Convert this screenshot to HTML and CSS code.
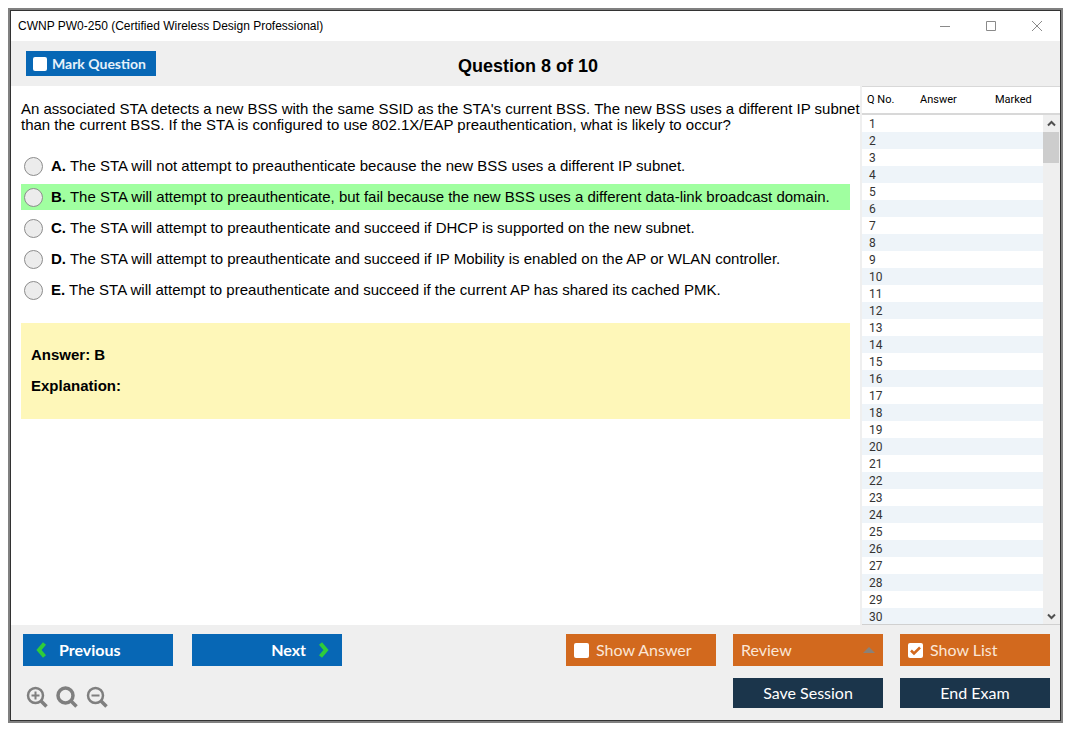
FILE: index.html
```html
<!DOCTYPE html>
<html lang="en">
<head>
    <meta charset="UTF-8">
    <meta name="viewport" content="width=device-width, initial-scale=1.0">
    <title>CWNP PW0-250 (Certified Wireless Design Professional)</title>
    <link rel="stylesheet" href="styles.css">
</head>
<body>
    <div class="window">
        <!-- Title Bar -->
        <div class="title-bar">
            <span>CWNP PW0-250 (Certified Wireless Design Professional)</span>
            <div class="window-controls">
                <button type="button" aria-label="Minimize"><svg width="12" height="12" viewBox="0 0 12 12"><path d="M1 6.500h10"/></svg></button>
                <button type="button" aria-label="Maximize"><svg width="12" height="12" viewBox="0 0 12 12"><path d="M1.500 1.500h9v9h-9z"/></svg></button>
                <button type="button" aria-label="Close"><svg width="12" height="12" viewBox="0 0 12 12"><path d="M1 1l10 10M11 1L1 11"/></svg></button>
            </div>
        </div>
        <!-- Question Header -->
        <header class="question-header">
            <label class="mark-question"><input type="checkbox" class="check"> Mark Question</label>
            <h1>Question 8 of 10</h1>
        </header>
        <main class="main">
            <!-- Question and Answers -->
            <section class="question">
                <p class="question-text" id="question-text">An associated STA detects a new BSS with the same SSID as the STA's current BSS. The new BSS uses a different IP subnet than the current BSS. If the STA is configured to use 802.1X/EAP preauthentication, what is likely to occur?</p>
                <div class="options" role="radiogroup" aria-labelledby="question-text">
                    <label class="option"><input type="radio" name="answer" value="A"><span><b>A.</b> The STA will not attempt to preauthenticate because the new BSS uses a different IP subnet.</span></label>
                    <label class="option correct"><input type="radio" name="answer" value="B"><span><b>B.</b> The STA will attempt to preauthenticate, but fail because the new BSS uses a different data-link broadcast domain.</span></label>
                    <label class="option"><input type="radio" name="answer" value="C"><span><b>C.</b> The STA will attempt to preauthenticate and succeed if DHCP is supported on the new subnet.</span></label>
                    <label class="option"><input type="radio" name="answer" value="D"><span><b>D.</b> The STA will attempt to preauthenticate and succeed if IP Mobility is enabled on the AP or WLAN controller.</span></label>
                    <label class="option"><input type="radio" name="answer" value="E"><span><b>E.</b> The STA will attempt to preauthenticate and succeed if the current AP has shared its cached PMK.</span></label>
                </div>
                <div class="explanation">
                    <p>Answer: B</p>
                    <p>Explanation:</p>
                </div>
            </section>
            <!-- Question List -->
            <aside class="question-list">
                <table>
                    <thead>
                        <tr><th>Q No.</th><th>Answer</th><th>Marked</th></tr>
                    </thead>
                    <tbody>
                        <tr><td>1</td><td></td><td></td></tr>
                        <tr><td>2</td><td></td><td></td></tr>
                        <tr><td>3</td><td></td><td></td></tr>
                        <tr><td>4</td><td></td><td></td></tr>
                        <tr><td>5</td><td></td><td></td></tr>
                        <tr><td>6</td><td></td><td></td></tr>
                        <tr><td>7</td><td></td><td></td></tr>
                        <tr><td>8</td><td></td><td></td></tr>
                        <tr><td>9</td><td></td><td></td></tr>
                        <tr><td>10</td><td></td><td></td></tr>
                        <tr><td>11</td><td></td><td></td></tr>
                        <tr><td>12</td><td></td><td></td></tr>
                        <tr><td>13</td><td></td><td></td></tr>
                        <tr><td>14</td><td></td><td></td></tr>
                        <tr><td>15</td><td></td><td></td></tr>
                        <tr><td>16</td><td></td><td></td></tr>
                        <tr><td>17</td><td></td><td></td></tr>
                        <tr><td>18</td><td></td><td></td></tr>
                        <tr><td>19</td><td></td><td></td></tr>
                        <tr><td>20</td><td></td><td></td></tr>
                        <tr><td>21</td><td></td><td></td></tr>
                        <tr><td>22</td><td></td><td></td></tr>
                        <tr><td>23</td><td></td><td></td></tr>
                        <tr><td>24</td><td></td><td></td></tr>
                        <tr><td>25</td><td></td><td></td></tr>
                        <tr><td>26</td><td></td><td></td></tr>
                        <tr><td>27</td><td></td><td></td></tr>
                        <tr><td>28</td><td></td><td></td></tr>
                        <tr><td>29</td><td></td><td></td></tr>
                        <tr><td>30</td><td></td><td></td></tr>
                    </tbody>
                </table>
                <div class="scrollbar">
                    <button type="button" aria-label="Scroll up"><svg width="9" height="7" viewBox="0 0 9 7"><path d="M1 5.500L4.500 2L8 5.500"/></svg></button>
                    <div class="scroll-thumb"></div>
                    <button type="button" aria-label="Scroll down"><svg width="9" height="7" viewBox="0 0 9 7"><path d="M1 1.500L4.500 5L8 1.500"/></svg></button>
                </div>
            </aside>
        </main>
        <!-- Bottom Controls -->
        <footer class="footer">
            <div class="footer-left">
                <div class="nav-buttons">
                    <button type="button" class="btn nav-btn">
                        <svg width="10" height="16" viewBox="0 0 10 16"><path d="M8.500 1.500L3 8L8.500 14.500"/></svg>
                        Previous
                    </button>
                    <button type="button" class="btn nav-btn next">
                        Next
                        <svg width="10" height="16" viewBox="0 0 10 16"><path d="M1.500 1.500L7 8L1.500 14.500"/></svg>
                    </button>
                </div>
                <div class="zoom-buttons">
                    <button type="button" aria-label="Zoom in"><svg width="22" height="22" viewBox="0 0 22 22"><circle cx="9.500" cy="9.500" r="7.500"/><path class="handle" d="M14.500 14.500L20.500 20.500"/><path d="M5.500 9.500h8M9.500 5.500v8"/></svg></button>
                    <button type="button" aria-label="Reset zoom"><svg width="22" height="22" viewBox="0 0 22 22"><circle class="plain" cx="9.500" cy="9.500" r="7.500"/><path class="handle" d="M14.500 14.500L20.500 20.500"/></svg></button>
                    <button type="button" aria-label="Zoom out"><svg width="22" height="22" viewBox="0 0 22 22"><circle cx="9.500" cy="9.500" r="7.500"/><path class="handle" d="M14.500 14.500L20.500 20.500"/><path d="M5.500 9.500h8"/></svg></button>
                </div>
            </div>
            <div class="footer-right">
                <label class="btn orange"><input type="checkbox" class="check"> Show Answer</label>
                <button type="button" class="btn orange review" aria-haspopup="true">Review <svg width="12" height="6" viewBox="0 0 12 6"><path d="M6 0l6 6H0z"/></svg></button>
                <label class="btn orange"><input type="checkbox" class="check" checked> Show List</label>
                <button type="button" class="btn dark save">Save Session</button>
                <button type="button" class="btn dark">End Exam</button>
            </div>
        </footer>
    </div>
</body>
</html>
```

FILE: styles.css
```css
/* Global Styling */
* {
    box-sizing: border-box;
}
body {
    margin: 0;
    padding: 8px 12px 12px 8px;
    min-height: 100vh;
    display: flex;
    background-color: #fff;
    color: #000;
    font-family: "Liberation Sans", Arial, sans-serif;
    font-size: 15px;
    line-height: 16px;
    text-rendering: optimizeLegibility;
}
button {
    border: none;
    padding: 0;
    background: none;
    font: inherit;
    cursor: pointer;
}
svg {
    display: block;
    fill: none;
}
p {
    margin: 0;
}
/* Window Frame */
.window {
    flex: 1;
    min-width: 0;
    display: flex;
    flex-direction: column;
    border: 2px solid #808080;
    outline: 1px solid #333;
    outline-offset: -3px;
    padding: 1px;
}
.title-bar {
    display: flex;
    justify-content: space-between;
    align-items: center;
    height: 30px;
    padding: 0 17px 0 7px;
    font-size: 12px;
}
.window-controls {
    display: flex;
    gap: 34px;
}
.window-controls path {
    stroke: #8a8a8a;
}
/* Question Header */
.question-header {
    display: grid;
    grid-template-columns: 1fr auto 1fr;
    align-items: center;
    height: 45px;
    padding: 0 30px 0 15px;
    background-color: #efefef;
}
.question-header h1 {
    margin: 0;
    padding-top: 4px;
    font-size: 18px;
    line-height: 20px;
}
.mark-question {
    justify-self: start;
    display: flex;
    align-items: center;
    gap: 5px;
    height: 25px;
    padding: 0 10px 0 7px;
    background-color: #0767b5;
    color: #e6f1fa;
    font-family: Lato, sans-serif;
    font-size: 14px;
    font-weight: bold;
}
.check {
    appearance: none;
    flex: none;
    width: 14px;
    height: 14px;
    margin: 0;
    border-radius: 2px;
    background-color: #fff;
}
/* Question and Answers */
.main {
    flex: 1;
    display: flex;
}
.question {
    flex: 1;
    padding: 15px 0 15px 10px;
}
.options {
    display: flex;
    flex-direction: column;
    gap: 5px;
    margin: 20px 10px 20px 0;
}
.option {
    display: flex;
    align-items: center;
    gap: 8px;
    min-height: 26px;
    padding: 0 3px;
}
.option input {
    appearance: none;
    flex: none;
    width: 19px;
    height: 19px;
    margin: 0;
    border: 1px solid #8c8c8c;
    border-radius: 50%;
    background-color: #ececec;
}
.option input:checked {
    box-shadow: inset 0 0 0 4px #ececec;
    background-color: #333;
}
.correct {
    background-color: #a0ffa0;
}
.explanation {
    display: flex;
    flex-direction: column;
    gap: 15px;
    margin-right: 10px;
    padding: 24px 10px 25px;
    background-color: #fef7b9;
    font-weight: bold;
}
/* Question List */
.question-list {
    position: relative;
    width: 200px;
    border-left: 2px solid #efefef;
    font-family: Roboto, sans-serif;
    font-size: 11px;
}
.question-list::after {
    content: "";
    position: absolute;
    right: 0;
    bottom: 0;
    left: 0;
    height: 1px;
    background-color: #d0d0d0;
}
.question-list table {
    width: 100%;
    border-spacing: 0;
    table-layout: fixed;
}
.question-list th {
    height: 29px;
    padding: 0 5px;
    border-top: 1px solid #d8d8d8;
    border-bottom: 2px solid #d8d8d8;
    font-weight: normal;
    text-align: left;
}
.question-list th:first-child {
    width: 53px;
}
.question-list th:nth-child(2) {
    width: 75px;
}
.question-list td {
    height: 17px;
    padding: 0 7px;
    color: #333;
    font-size: 12px;
}
.question-list tr:nth-child(even) td {
    background-color: #eef4f9;
}
.scrollbar {
    position: absolute;
    top: 29px;
    right: 0;
    bottom: 0;
    width: 17px;
    display: flex;
    flex-direction: column;
    background-color: #efefef;
}
.scrollbar button {
    display: flex;
    align-items: center;
    justify-content: center;
    height: 17px;
}
.scrollbar button:last-child {
    margin-top: auto;
}
.scrollbar path {
    stroke: #505050;
    stroke-width: 2;
}
.scroll-thumb {
    height: 31px;
    margin-right: 1px;
    background-color: #cdcdcd;
}
/* Bottom Controls */
.footer {
    display: flex;
    justify-content: space-between;
    padding: 9px 10px 12px 12px;
    background-color: #efefef;
}
.footer-left {
    display: flex;
    flex-direction: column;
    gap: 20px;
}
.nav-buttons {
    display: flex;
    gap: 19px;
}
.btn {
    display: flex;
    align-items: center;
    width: 150px;
    height: 32px;
    font-family: Lato, sans-serif;
    font-size: 16px;
    cursor: pointer;
}
.nav-btn {
    gap: 13px;
    padding: 0 13px;
    background-color: #0767b5;
    color: #fff;
    font-weight: bold;
}
.nav-btn path {
    stroke: #2fcc3a;
    stroke-width: 4;
}
.next {
    justify-content: flex-end;
}
.zoom-buttons {
    display: flex;
    gap: 8px;
    padding-left: 3px;
}
.zoom-buttons svg {
    stroke: #7f7f7f;
    stroke-width: 2;
}
.zoom-buttons circle {
    stroke-width: 2.5;
}
.zoom-buttons .handle,
.zoom-buttons .plain {
    stroke-width: 3.5;
}
.footer-right {
    display: grid;
    grid-template-columns: repeat(3, 150px);
    gap: 12px 17px;
}
.orange {
    gap: 7px;
    padding: 0 8px;
    background-color: #d2691e;
    color: #fbe6d6;
}
.orange .check {
    width: 15px;
    height: 15px;
}
.check:checked {
    background-image: url("data:image/svg+xml,%3Csvg xmlns='http://www.w3.org/2000/svg' viewBox='0 0 15 15'%3E%3Cpath d='M3 7.500l3 3 6-6' fill='none' stroke='%23d2691e' stroke-width='2.500'/%3E%3C/svg%3E");
}
.review {
    justify-content: space-between;
}
.review path {
    fill: #8a8178;
}
.dark {
    justify-content: center;
    height: 30px;
    background-color: #1b354b;
    color: #fff;
}
.save {
    grid-column: 2;
}
```
